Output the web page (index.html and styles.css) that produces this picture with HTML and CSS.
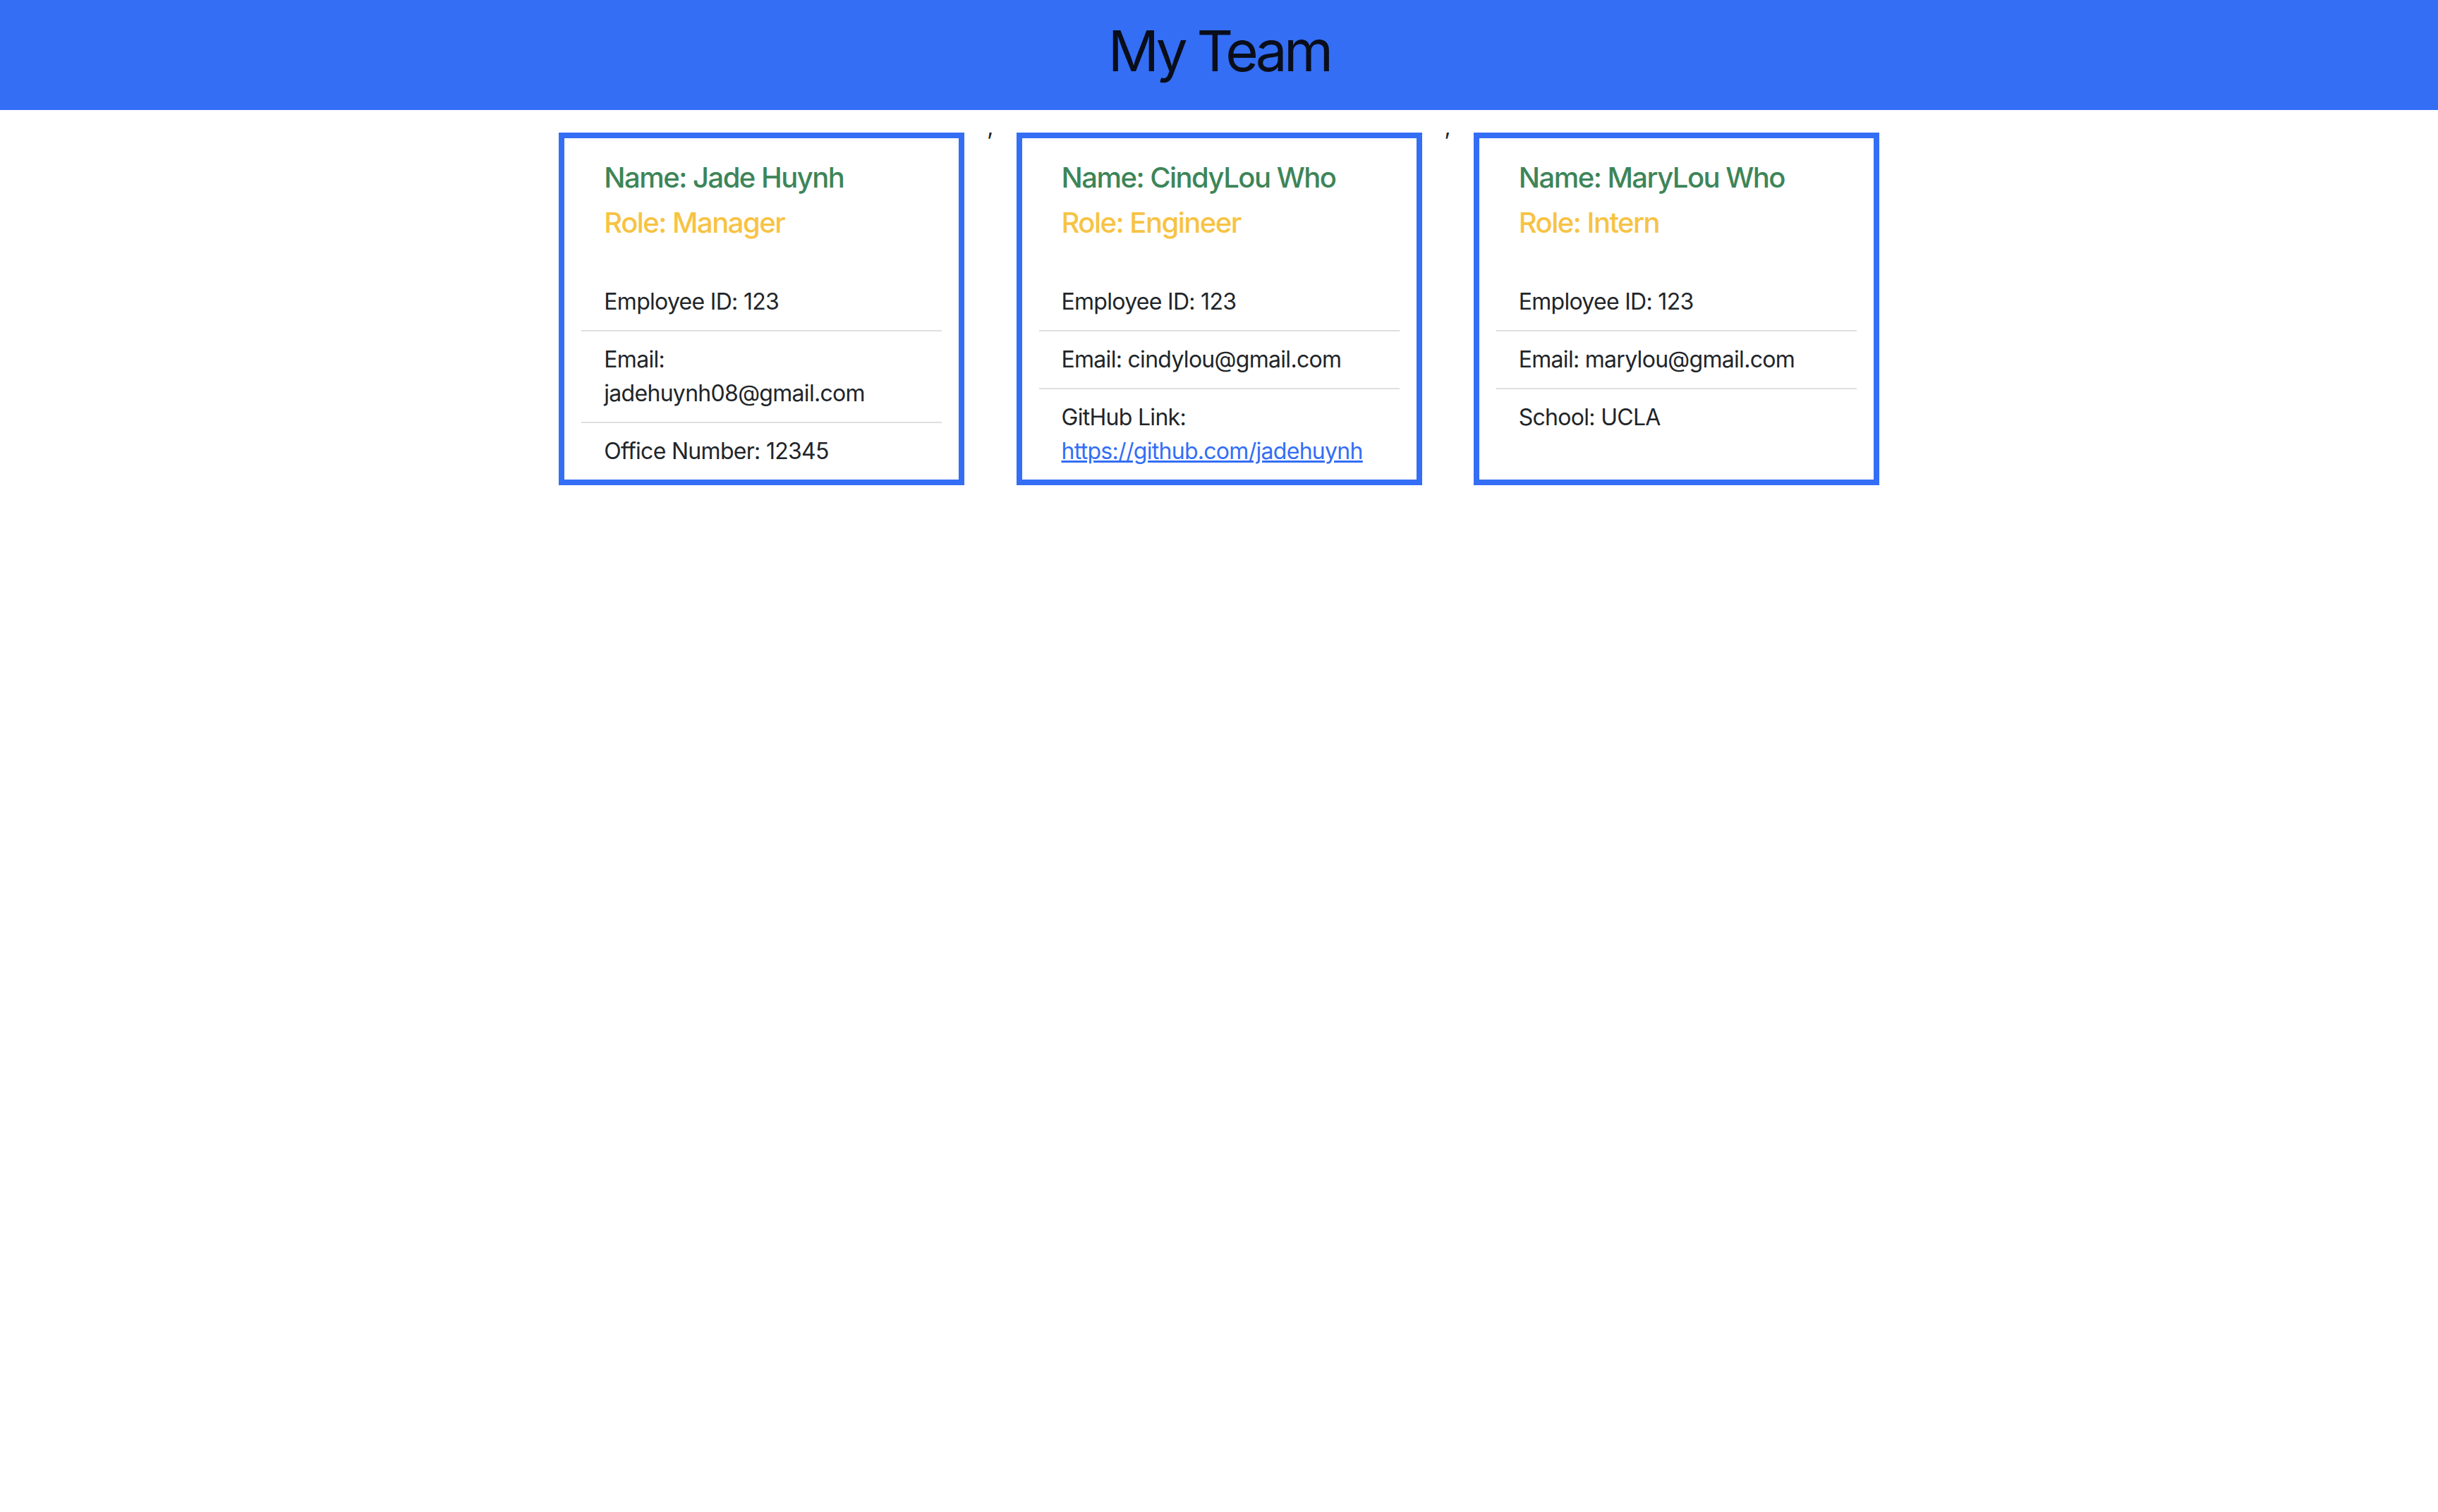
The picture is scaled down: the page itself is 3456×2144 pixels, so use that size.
FILE: index.html
```html
<!DOCTYPE html>
<html lang="en">
<head>
<meta charset="utf-8">
<title>My Team</title>
<link rel="stylesheet" href="styles.css">
</head>
<body>
<header class="hero">
  <h1 class="hero-title">My Team</h1>
</header>
<main class="team">
  <div class="card">
    <div class="card-body">
      <h5 class="card-name">Name: Jade Huynh</h5>
      <h5 class="card-role">Role: Manager</h5>
    </div>
    <ul class="info-list">
      <li class="info-item">Employee ID: 123</li>
      <li class="info-item">Email: jadehuynh08@gmail.com</li>
      <li class="info-item">Office Number: 12345</li>
    </ul>
  </div>
  <span class="sep">,</span>
  <div class="card">
    <div class="card-body">
      <h5 class="card-name">Name: CindyLou Who</h5>
      <h5 class="card-role">Role: Engineer</h5>
    </div>
    <ul class="info-list">
      <li class="info-item">Employee ID: 123</li>
      <li class="info-item">Email: cindylou@gmail.com</li>
      <li class="info-item">GitHub Link: <a class="info-link" href="#">https://github.com/jadehuynh</a></li>
    </ul>
  </div>
  <span class="sep">,</span>
  <div class="card">
    <div class="card-body">
      <h5 class="card-name">Name: MaryLou Who</h5>
      <h5 class="card-role">Role: Intern</h5>
    </div>
    <ul class="info-list">
      <li class="info-item">Employee ID: 123</li>
      <li class="info-item">Email: marylou@gmail.com</li>
      <li class="info-item">School: UCLA</li>
    </ul>
  </div>
</main>
</body>
</html>
```
FILE: styles.css
```css
body {
  margin: 0;
  font-family: Inter, "Noto Sans", "Liberation Sans", sans-serif;
  color: #212529;
  background: #ffffff;
}

.hero {
  background: #336ef5;
  padding: 24px 0 36px;
  text-align: center;
}

.hero-title {
  margin: 0;
  font-size: 80px;
  line-height: 96px;
  font-weight: 400;
  color: #0a0e1a;
  letter-spacing: -0.06em;
}

.team {
  display: flex;
  justify-content: center;
  align-items: stretch;
}

.card {
  width: 575px;
  box-sizing: border-box;
  margin: 32px;
  border: 8px solid #336ef5;
  padding: 0 24px;
  display: flex;
  flex-direction: column;
}

.card-body {
  padding: 32px 32px 32px;
}

.card-name,
.card-role {
  margin: 0 0 16px;
  font-size: 40px;
  line-height: 48px;
  font-weight: 500;
  letter-spacing: -0.038em;
}

.card-name {
  color: #3d8558;
}

.card-role {
  color: #f7c344;
}

.info-list {
  list-style: none;
  margin: 0;
  padding: 0;
}

.info-item {
  padding: 16px 32px;
  font-size: 32px;
  line-height: 48px;
  letter-spacing: -0.022em;
  border-bottom: 2px solid #dfdfdf;
}

.info-item:last-child {
  border-bottom: 0;
}

.info-link {
  color: #336ef5;
  text-decoration: underline;
}

.sep {
  font-size: 32px;
  line-height: 48px;
  color: #212529;
}
```
